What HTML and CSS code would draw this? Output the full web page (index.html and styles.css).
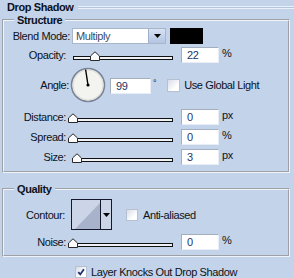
FILE: index.html
```html
<!DOCTYPE html>
<html lang="en">
<head>
    <meta charset="UTF-8">
    <title>Drop Shadow</title>
    <link rel="stylesheet" href="styles.css">
</head>
<body>
    <div class="title-row">
        <span class="title">Drop Shadow</span>
        <span class="title-rule"></span>
    </div>

    <!-- Structure -->
    <fieldset class="group structure">
        <legend>Structure</legend>

        <div class="row blend-row">
            <span class="lbl">Blend Mode:</span>
            <div class="select">
                <span class="select-value">Multiply</span>
                <span class="select-btn"><svg width="7" height="4" viewBox="0 0 7 4"><path d="M0 0h7L3.5 4z"/></svg></span>
            </div>
            <span class="swatch"></span>
        </div>

        <div class="row slider-row opacity-row">
            <span class="lbl">Opacity:</span>
            <div class="slider">
                <span class="track"></span>
                <svg class="thumb" style="left: 22%" width="10" height="10" viewBox="0 0 10 10"><path d="M0.5 9.5V5L5 0.8 9.5 5v4.5z"/></svg>
            </div>
            <span class="field">22</span><span class="unit">%</span>
        </div>

        <div class="row angle-row">
            <span class="lbl">Angle:</span>
            <svg class="dial" width="36" height="36" viewBox="0 0 36 36">
                <circle cx="18" cy="18" r="16.5" fill="#f3f3f0" stroke="#7b8496" stroke-width="1.6"/>
                <circle cx="18" cy="18" r="15" fill="none" stroke="#dcdcd8" stroke-width="1"/>
                <line x1="18" y1="18" x2="15.6" y2="2.5" stroke="#000" stroke-width="1.4"/>
                <circle cx="18" cy="18" r="1.6" fill="#000"/>
            </svg>
            <span class="field angle-field">99</span>
            <span class="degree">&deg;</span>
            <span class="check global-check"></span>
            <span class="check-text">Use Global Light</span>
        </div>

        <div class="row slider-row distance-row">
            <span class="lbl">Distance:</span>
            <div class="slider">
                <span class="track"></span>
                <svg class="thumb" style="left: 0%" width="10" height="10" viewBox="0 0 10 10"><path d="M0.5 9.5V5L5 0.8 9.5 5v4.5z"/></svg>
            </div>
            <span class="field">0</span><span class="unit">px</span>
        </div>

        <div class="row slider-row spread-row">
            <span class="lbl">Spread:</span>
            <div class="slider">
                <span class="track"></span>
                <svg class="thumb" style="left: 0%" width="10" height="10" viewBox="0 0 10 10"><path d="M0.5 9.5V5L5 0.8 9.5 5v4.5z"/></svg>
            </div>
            <span class="field">0</span><span class="unit">%</span>
        </div>

        <div class="row slider-row size-row">
            <span class="lbl">Size:</span>
            <div class="slider">
                <span class="track"></span>
                <svg class="thumb" style="left: 4%" width="10" height="10" viewBox="0 0 10 10"><path d="M0.5 9.5V5L5 0.8 9.5 5v4.5z"/></svg>
            </div>
            <span class="field">3</span><span class="unit">px</span>
        </div>
    </fieldset>

    <!-- Quality -->
    <fieldset class="group quality">
        <legend>Quality</legend>

        <div class="row contour-row">
            <span class="lbl">Contour:</span>
            <div class="contour">
                <svg class="contour-preview" width="28" height="29" viewBox="0 0 28 29"><path d="M3 29L28 3V29z" fill="#a8b2ca"/></svg>
                <span class="contour-btn"><svg width="7" height="4" viewBox="0 0 7 4"><path d="M0 0h7L3.5 4z"/></svg></span>
            </div>
            <span class="check aa-check"></span>
            <span class="check-text">Anti-aliased</span>
        </div>

        <div class="row slider-row noise-row">
            <span class="lbl">Noise:</span>
            <div class="slider">
                <span class="track"></span>
                <svg class="thumb" style="left: 0%" width="10" height="10" viewBox="0 0 10 10"><path d="M0.5 9.5V5L5 0.8 9.5 5v4.5z"/></svg>
            </div>
            <span class="field">0</span><span class="unit">%</span>
        </div>
    </fieldset>

    <div class="row knock-row">
        <span class="check checked"><svg width="11" height="11" viewBox="0 0 11 11"><path d="M2.5 5.2l2.2 2.4 4-5.6" fill="none" stroke="#1f2f6e" stroke-width="2"/></svg></span>
        <span class="check-text">Layer Knocks Out Drop Shadow</span>
    </div>
</body>
</html>
```

FILE: styles.css
```css
body {
    margin: 0;
    width: 294px;
    height: 278px;
    overflow: hidden;
    background-color: #c3d3ea;
    font-family: "Liberation Sans", Arial, sans-serif;
    font-size: 11px;
    letter-spacing: -0.4px;
    color: #0c1220;
}

.title-row {
    display: flex;
    align-items: center;
    height: 14px;
    padding-left: 7px;
}

.title {
    font-weight: bold;
}

.title-rule {
    flex: 1;
    height: 1px;
    margin-left: 4px;
    background-color: #b4c5e0;
    border-top: 1px solid #eaf0fa;
    border-bottom: 1px solid #eaf0fa;
}

.group {
    margin: 0 4px 0 2px;
    padding: 0 0 6px;
    border: 2px groove #eef3fb;
    min-width: 0;
}

.group legend {
    margin-left: 10px;
    padding: 0 3px;
    font-weight: bold;
    line-height: 12px;
}

.quality {
    margin-top: 10px;
    padding-bottom: 5px;
}

.row {
    display: flex;
    align-items: center;
}

.lbl {
    width: 62px;
    flex-shrink: 0;
    text-align: right;
}

/* blend mode */
.blend-row {
    margin-top: 2px;
    height: 16px;
}

.blend-row .lbl {
    width: 66px;
}

.select {
    display: flex;
    width: 94px;
    height: 16px;
    margin-left: 2px;
    box-sizing: border-box;
    background-color: #fff;
    border: 1px solid #a9b5c8;
}

.select-value {
    flex: 1;
    padding-left: 3px;
    line-height: 14px;
    color: #3c4a66;
}

.select-btn {
    display: flex;
    align-items: center;
    justify-content: center;
    width: 16px;
    background: linear-gradient(#d6e1f3, #b3c4e2);
    border-left: 1px solid #9fb0cd;
}

.swatch {
    width: 33px;
    height: 16px;
    margin-left: 4px;
    background-color: #000;
}

/* sliders */
.slider-row {
    height: 16px;
}

.opacity-row {
    margin-top: 3px;
}

.distance-row {
    margin-top: 6px;
}

.spread-row,
.size-row {
    margin-top: 4px;
}

.noise-row {
    margin-top: 4px;
}

.slider {
    position: relative;
    width: 100px;
    height: 16px;
    margin-left: 7px;
    padding-top: 9px;
    box-sizing: border-box;
}

.track {
    display: block;
    height: 4px;
    box-sizing: border-box;
    border: 1px solid #111;
    background-color: #eef1f6;
}

.thumb {
    position: absolute;
    top: 4px;
    margin-left: -5px;
}

.thumb path {
    fill: #fafafa;
    stroke: #2a2a2a;
}

.field {
    width: 38px;
    height: 16px;
    margin-left: 8px;
    padding-left: 5px;
    box-sizing: border-box;
    line-height: 15px;
    background-color: #fff;
    border-top: 1px solid #a3aebf;
    border-left: 1px solid #a3aebf;
    border-bottom: 1px solid #e8edf6;
    border-right: 1px solid #e8edf6;
    color: #1d3466;
}

.unit {
    margin-left: 3px;
    align-self: flex-start;
    line-height: 13px;
}

/* angle */
.angle-row {
    margin-top: 4px;
    height: 36px;
}

.angle-row .lbl {
    width: 65px;
}

.dial {
    margin-left: 1px;
}

.angle-field {
    width: 41px;
    margin-left: 4px;
    margin-top: 2px;
}

.degree {
    margin-left: 2px;
    align-self: flex-start;
    margin-top: 11px;
    font-size: 9px;
}

.check {
    display: flex;
    align-items: center;
    justify-content: center;
    width: 12px;
    height: 12px;
    box-sizing: border-box;
    border: 1px solid #b7c0cf;
    background: linear-gradient(135deg, #d8dde6, #ffffff 70%);
}

.global-check {
    margin-left: 11px;
    width: 13px;
    height: 13px;
}

.check-text {
    margin-left: 4px;
}

/* quality */
.contour-row {
    margin-top: 4px;
    height: 31px;
}

.contour-row .lbl {
    width: 61px;
}

.contour {
    display: flex;
    width: 41px;
    height: 31px;
    margin-left: 6px;
    box-sizing: border-box;
    border: 1px solid #15182a;
    background-color: #cbd5e7;
}

.contour-btn {
    display: flex;
    align-items: center;
    justify-content: center;
    flex: 1;
    border-left: 1px solid #15182a;
}

.aa-check {
    margin-left: 14px;
}

.aa-check + .check-text {
    margin-left: 5px;
}

.knock-row {
    margin-top: 9px;
    padding-left: 75px;
}

.knock-row .check {
    width: 12px;
    height: 12px;
}
```
